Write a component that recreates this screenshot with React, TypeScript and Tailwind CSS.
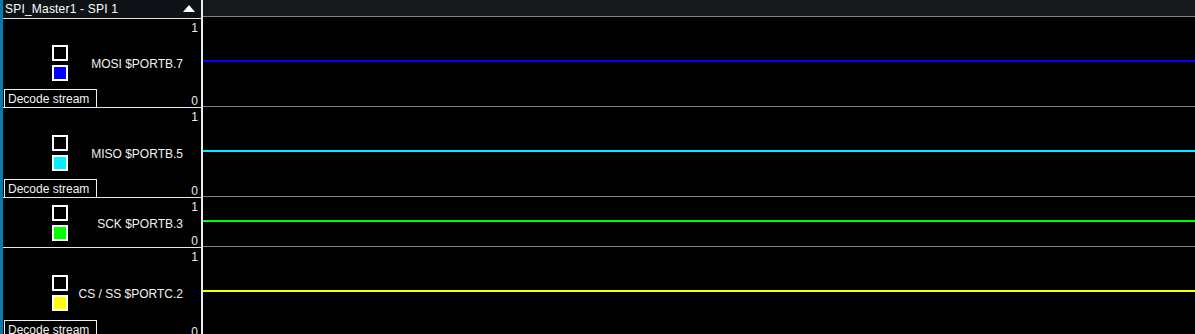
import React from "react";

type Sig = {
  name: string;
  color: string;
  leftH: string;
  rightH: string;
  decode: boolean;
};

const signals: Sig[] = [
  { name: "MOSI $PORTB.7", color: "bg-[#0000ff]", leftH: "h-[89px]", rightH: "h-[90px]", decode: true },
  { name: "MISO $PORTB.5", color: "bg-[#00f0ff]", leftH: "h-[90px]", rightH: "h-[90px]", decode: true },
  { name: "SCK $PORTB.3", color: "bg-[#00ff00]", leftH: "h-[50px]", rightH: "h-[50px]", decode: false },
  { name: "CS / SS $PORTC.2", color: "bg-[#ffff00]", leftH: "h-[90px]", rightH: "h-[90px]", decode: true },
];

function LeftRow({ s, last }: { s: Sig; last: boolean }) {
  return (
    <div className={`grid shrink-0 ${s.leftH} ${last ? "" : "border-b border-[#e4e8ec]"}`}>
      <div className="col-start-1 row-start-1 self-start justify-self-end pr-[3px] mt-[3px] text-[12px] leading-[12px] text-[#eaeaea]">
        1
      </div>
      <div className="col-start-1 row-start-1 self-end justify-self-end pr-[3px] text-[12px] leading-[12px] text-[#eaeaea]">
        0
      </div>
      <div className="col-start-1 row-start-1 self-center flex items-center">
        <div className="ml-[49px] flex flex-col gap-[4px]">
          <div className="h-[16px] w-[16px] border-2 border-white bg-black" />
          <div className={`h-[16px] w-[16px] border-2 border-white ${s.color}`} />
        </div>
        <div className="flex-1 pr-[18px] pt-[2px] text-right text-[12px] leading-[14px] text-[#f2f2f2]">
          {s.name}
        </div>
      </div>
      {s.decode && (
        <div className="col-start-1 row-start-1 self-end justify-self-start ml-[1px] h-[18px] w-[93px] border-t border-l border-r border-[#f0f0f0] pl-[3px] pt-[2px] text-[12px] leading-[14px] text-[#f2f2f2]">
          Decode stream
        </div>
      )}
    </div>
  );
}

function RightRow({ s, last }: { s: Sig; last: boolean }) {
  return (
    <div className={`flex shrink-0 items-center pb-[2px] ${s.rightH} ${last ? "" : "border-b border-[#808080]"}`}>
      <div className={`h-[2px] w-full ${s.color}`} />
    </div>
  );
}

export default function App() {
  return (
    <div
      className="flex h-[334px] w-[1195px] overflow-hidden bg-black"
      style={{ fontFamily: '"Liberation Sans", Arial, sans-serif' }}
    >
      <div className="w-[3px] shrink-0 bg-[#0a7aae]" />
      <div className="flex w-[198px] shrink-0 flex-col bg-black">
        <div className="flex h-[19px] shrink-0 items-center justify-between border-b border-[#dce6ee] bg-[#0e1216] pl-[2px] pr-[6px]">
          <span className="text-[12px] leading-[14px] tracking-[0.2px] text-white">SPI_Master1 - SPI 1</span>
          <svg width="12" height="7" viewBox="0 0 12 7" className="mb-[1px]">
            <polygon points="6,0 12,7 0,7" fill="#ffffff" />
          </svg>
        </div>
        {signals.map((s, i) => (
          <LeftRow key={s.name} s={s} last={i === signals.length - 1} />
        ))}
      </div>
      <div className="w-[2px] shrink-0 bg-[#e6eef4]" />
      <div className="flex flex-1 flex-col">
        <div className="h-[17px] shrink-0 border-b border-[#808080] bg-[#17181a]" />
        {signals.map((s, i) => (
          <RightRow key={s.name} s={s} last={i === signals.length - 1} />
        ))}
      </div>
    </div>
  );
}
